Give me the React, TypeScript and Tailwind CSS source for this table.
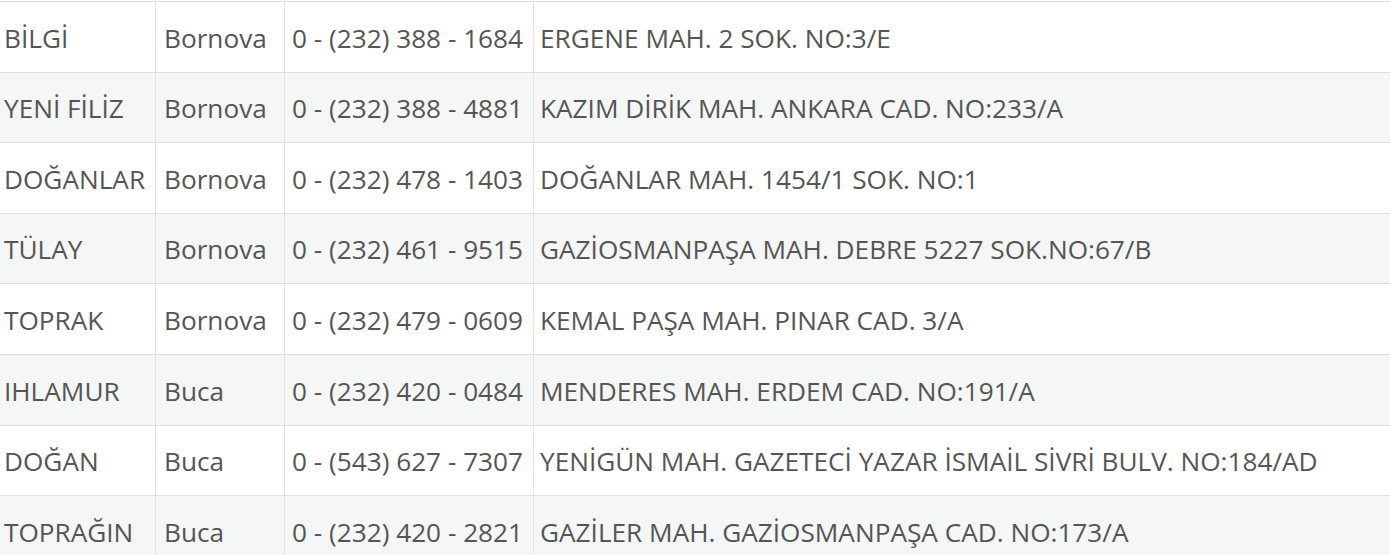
import React from 'react';

const rows = [
  { name: 'BİLGİ', town: 'Bornova', phone: '0 - (232) 388 - 1684', address: 'ERGENE MAH. 2 SOK. NO:3/E' },
  { name: 'YENİ FİLİZ', town: 'Bornova', phone: '0 - (232) 388 - 4881', address: 'KAZIM DİRİK MAH. ANKARA CAD. NO:233/A' },
  { name: 'DOĞANLAR', town: 'Bornova', phone: '0 - (232) 478 - 1403', address: 'DOĞANLAR MAH. 1454/1 SOK. NO:1' },
  { name: 'TÜLAY', town: 'Bornova', phone: '0 - (232) 461 - 9515', address: 'GAZİOSMANPAŞA MAH. DEBRE 5227 SOK.NO:67/B' },
  { name: 'TOPRAK', town: 'Bornova', phone: '0 - (232) 479 - 0609', address: 'KEMAL PAŞA MAH. PINAR CAD. 3/A' },
  { name: 'IHLAMUR', town: 'Buca', phone: '0 - (232) 420 - 0484', address: 'MENDERES MAH. ERDEM CAD. NO:191/A' },
  { name: 'DOĞAN', town: 'Buca', phone: '0 - (543) 627 - 7307', address: 'YENİGÜN MAH. GAZETECİ YAZAR İSMAİL SİVRİ BULV. NO:184/AD' },
  { name: 'TOPRAĞIN', town: 'Buca', phone: '0 - (232) 420 - 2821', address: 'GAZİLER MAH. GAZİOSMANPAŞA CAD. NO:173/A' },
];

export default function App() {
  return (
    <div className="w-[1390px] h-[555px] overflow-hidden bg-white pt-px font-['Open_Sans',sans-serif] text-[26.2px] text-[#555]">
      <div className="border-t border-[#dedede]">
        {rows.map((r, i) => (
          <div
            key={i}
            className={`grid grid-cols-[156px_129px_249px_1fr] h-[70.6px] border-b border-[#dedede] ${
              i % 2 === 1 ? 'bg-[#f5f6f6]' : 'bg-white'
            }`}
          >
            <div className="flex items-center pt-[3px] pl-[4px] border-r border-[#e3e3e3] whitespace-nowrap">{r.name}</div>
            <div className="flex items-center pt-[3px] pl-[8px] border-r border-[#e3e3e3] whitespace-nowrap">{r.town}</div>
            <div className="flex items-center pt-[3px] pl-[7px] border-r border-[#e3e3e3] whitespace-nowrap">{r.phone}</div>
            <div className="flex items-center pt-[3px] pl-[6px] whitespace-nowrap">{r.address}</div>
          </div>
        ))}
      </div>
    </div>
  );
}
